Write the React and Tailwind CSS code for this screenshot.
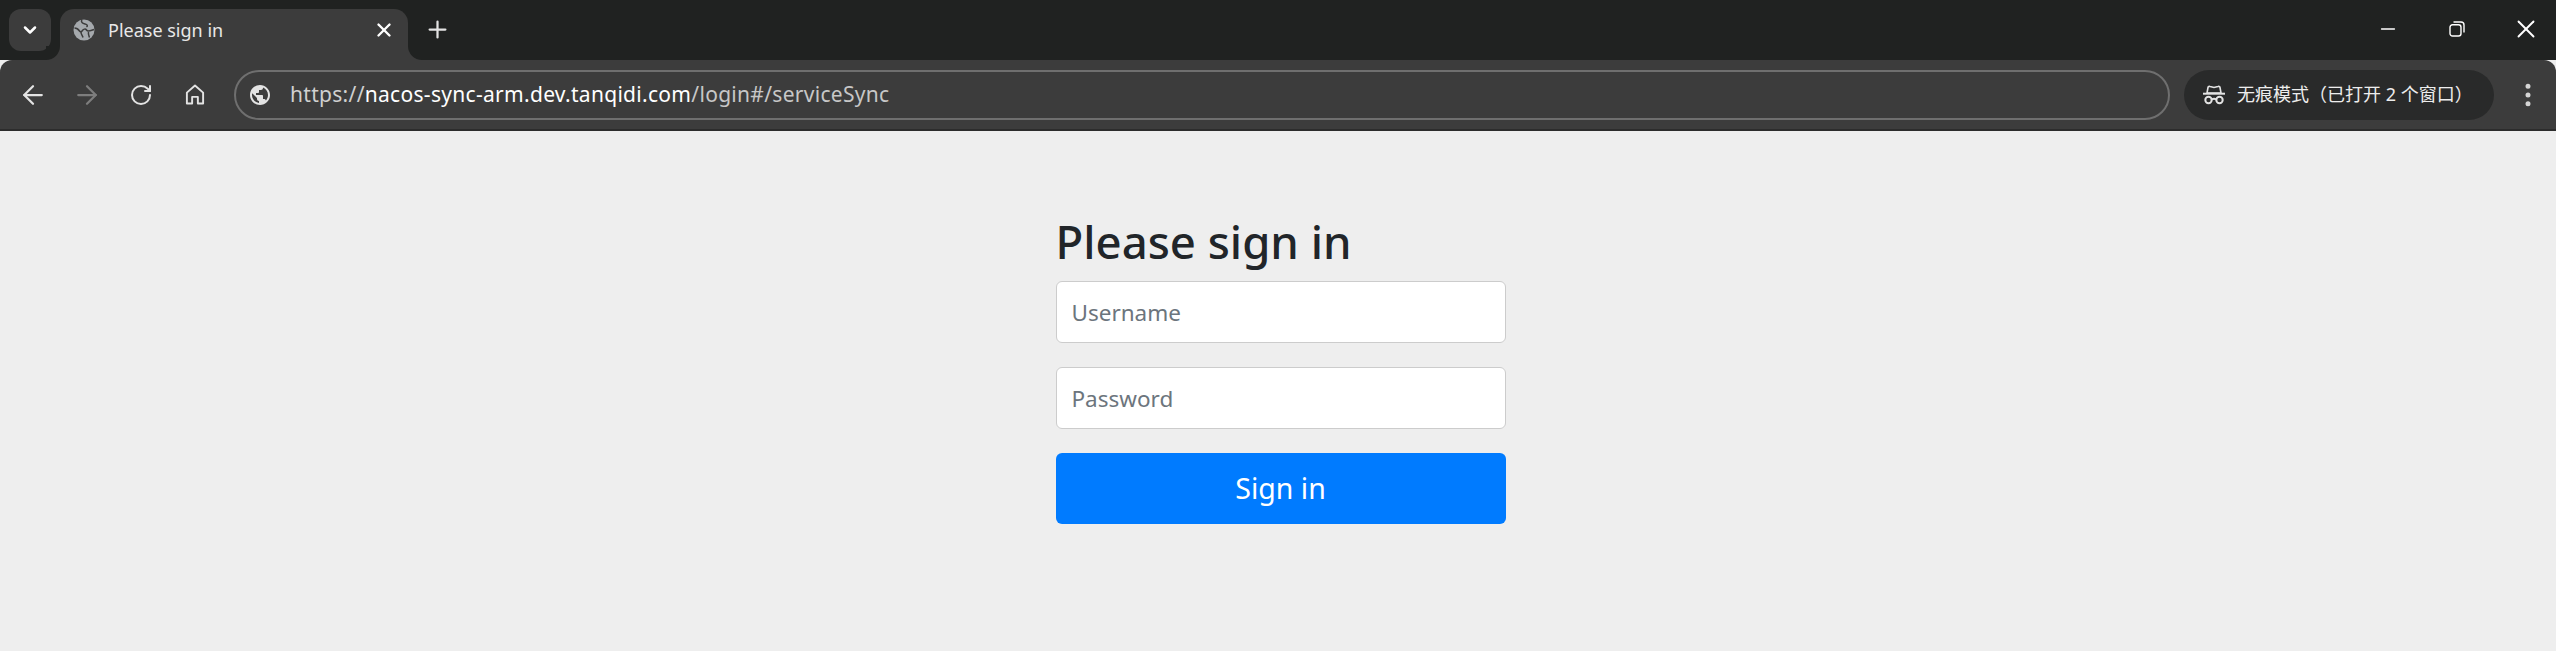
import { ArrowLeft, ArrowRight, ChevronDown, Plus, X, RotateCw, EllipsisVertical, Minus } from 'lucide-react';

const GLOBE =
  'M12 2C6.48 2 2 6.48 2 12s4.48 10 10 10 10-4.48 10-10S17.52 2 12 2zm-1 17.93c-3.95-.49-7-3.85-7-7.93 0-.62.08-1.21.21-1.79L9 15v1c0 1.1.9 2 2 2v1.93zm6.9-2.54c-.26-.81-1-1.39-1.9-1.39h-1v-3c0-.55-.45-1-1-1H8v-2h2c.55 0 1-.45 1-1V7h2c1.1 0 2-.9 2-2v-.41c2.93 1.19 5 4.06 5 7.41 0 2.08-.8 3.97-2.1 5.39z';

function TabGlobe() {
  return (
    <svg viewBox="0 0 22 22" className="h-[22px] w-[22px] shrink-0">
      <circle cx="11" cy="11" r="10.5" fill="#a5a9ad" />
      <path d="M9 1c-1.500 2 .5 3.500 3 4s3 2 1.500 3" fill="none" stroke="#3c3c3c" strokeWidth="1.500" />
      <path d="M1.500 9c2.500 0 4 1.500 5 3 .8 1.200 2 1 3-.5s3-2 4-.5 4 1 7.500-.5" fill="none" stroke="#3c3c3c" strokeWidth="1.500" />
      <path d="M8 13c0 2.500 1.500 3.500 2 5.500M15.500 13c-.5 2 .5 4 1 5.500" fill="none" stroke="#3c3c3c" strokeWidth="1.500" />
    </svg>
  );
}

function HomeIcon() {
  return (
    <svg viewBox="0 0 20 22" fill="none" stroke="#e3e3e3" strokeWidth="2" className="h-[21px] w-[20px]">
      <path d="M1.500 9 10 1.500 18.500 9v11.500h-5.500v-7H7v7H1.500z" strokeLinejoin="round" />
    </svg>
  );
}

function IncognitoIcon() {
  return (
    <svg viewBox="0 0 22 20" fill="none" className="h-[20px] w-[22px] shrink-0">
      <path d="M5 2.500 4 8h14l-1-5.500c-.2-1-1.200-1.300-2-1l-4 1-4-1c-.8-.3-1.800 0-2 1z" stroke="#e3e3e3" strokeWidth="1.600" />
      <path d="M0 8.700h22" stroke="#e3e3e3" strokeWidth="2" />
      <circle cx="5.500" cy="15" r="3.200" stroke="#e3e3e3" strokeWidth="2" />
      <circle cx="16.500" cy="15" r="3.200" stroke="#e3e3e3" strokeWidth="2" />
      <path d="M8.700 14.500c1.500-1 3.100-1 4.600 0" stroke="#e3e3e3" strokeWidth="2" />
    </svg>
  );
}

function RestoreIcon() {
  return (
    <svg viewBox="0 0 16 16" fill="none" stroke="#fff" strokeWidth="1.400" className="h-[16px] w-[16px]">
      <rect x="1" y="3.700" width="11" height="11.300" rx="2.500" />
      <path d="M4.500 1h7.500a3 3 0 0 1 3 3v7.500" />
    </svg>
  );
}

export default function App() {
  return (
    <div className="flex h-screen flex-col bg-[#eeeeee] font-['Noto_Sans','Noto_Sans_CJK_SC',sans-serif]">
      {/* tab strip */}
      <div className="flex h-[60px] shrink-0 items-end bg-[#202221] pl-[9px]">
        <div className="mb-[9px] flex h-[42px] w-[42px] items-center justify-center rounded-[12px] bg-[#3c3c3c]">
          <ChevronDown className="h-[20px] w-[20px] text-white" strokeWidth={3} />
        </div>
        <div className="relative ml-[9px] flex h-[51px] w-[348px] items-center rounded-t-[14px] bg-[#3c3c3c] pb-[9px] pl-[13px] pr-[13px]">
          <span className="absolute bottom-0 left-[-14px] h-[14px] w-[14px] bg-[#3c3c3c]">
            <span className="block h-full w-full rounded-br-[14px] bg-[#202221]" />
          </span>
          <span className="absolute bottom-0 right-[-14px] h-[14px] w-[14px] bg-[#3c3c3c]">
            <span className="block h-full w-full rounded-bl-[14px] bg-[#202221]" />
          </span>
          <TabGlobe />
          <span className="ml-[13px] flex-1 text-[18px] leading-[24px] text-[#e8e8e8]">Please sign in</span>
          <X className="h-[22px] w-[22px] text-white" strokeWidth={2.6} />
        </div>
        <Plus className="mb-[17px] ml-[16px] h-[27px] w-[27px] text-[#e3e3e3]" strokeWidth={2} />
        <div className="mb-[16px] ml-auto flex items-center">
          <Minus className="h-[22px] w-[22px] text-white" strokeWidth={1.6} />
          <div className="ml-[50px]"><RestoreIcon /></div>
          <X className="ml-[46px] mr-[15px] h-[30px] w-[30px] text-white" strokeWidth={1.5} />
        </div>
      </div>

      {/* toolbar */}
      <div className="flex h-[71px] shrink-0 items-center rounded-t-[12px] border-b-2 border-[#2c2c2c] bg-[#3c3c3c]">
        <ArrowLeft className="ml-[18px] h-[30px] w-[30px] text-[#e3e3e3]" strokeWidth={1.8} />
        <ArrowRight className="ml-[24px] h-[30px] w-[30px] text-[#7d7d7d]" strokeWidth={1.8} />
        <RotateCw className="ml-[27px] h-[24px] w-[24px] text-[#e3e3e3]" strokeWidth={2} />
        <div className="ml-[32px]"><HomeIcon /></div>
        <div className="ml-[29px] flex h-[50px] w-[1936px] items-center rounded-full border-2 border-[#6f6f6f] bg-[#3c3c3c] pl-[12px]">
          <svg viewBox="0 0 24 24" className="h-[24px] w-[24px] shrink-0" fill="#e3e3e3"><path d={GLOBE} /></svg>
          <div className="ml-[18px] text-[21px] tracking-[0.3px] text-white">
            <span className="text-[#d0d0d0]">https://</span>
            nacos-sync-arm.dev.tanqidi.com
            <span className="text-[#c7c7c7]">/login#/serviceSync</span>
          </div>
        </div>
        <div className="ml-[14px] flex h-[50px] w-[310px] items-center rounded-full bg-[#292a2a] pl-[19px]">
          <IncognitoIcon />
          <span className="ml-[12px] whitespace-nowrap text-[18px] text-[#ededed]">无痕模式（已打开 2 个窗口）</span>
        </div>
        <EllipsisVertical className="ml-[19px] h-[30px] w-[30px] text-[#d5d5d5]" strokeWidth={2} />
      </div>

      {/* page */}
      <div className="flex flex-1 justify-center pl-[5px]">
        <form className="mt-[82px] w-[450px]">
          <h2 className="text-[45.5px] font-medium leading-[57px] text-[#212529]">Please sign in</h2>
          <input
            placeholder="Username"
            className="mt-[11px] block h-[62px] w-full rounded-[6px] border-[1.5px] border-[#cccccc] bg-white px-[15px] text-[22.5px] placeholder:text-[#6c757d]"
          />
          <input
            placeholder="Password"
            className="mt-[24px] block h-[62px] w-full rounded-[6px] border-[1.5px] border-[#cccccc] bg-white px-[15px] text-[22.5px] placeholder:text-[#6c757d]"
          />
          <button type="button" className="mt-[24px] block h-[71px] w-full rounded-[6px] bg-[#007bff] text-[28.5px] text-white">
            Sign in
          </button>
        </form>
      </div>
    </div>
  );
}
